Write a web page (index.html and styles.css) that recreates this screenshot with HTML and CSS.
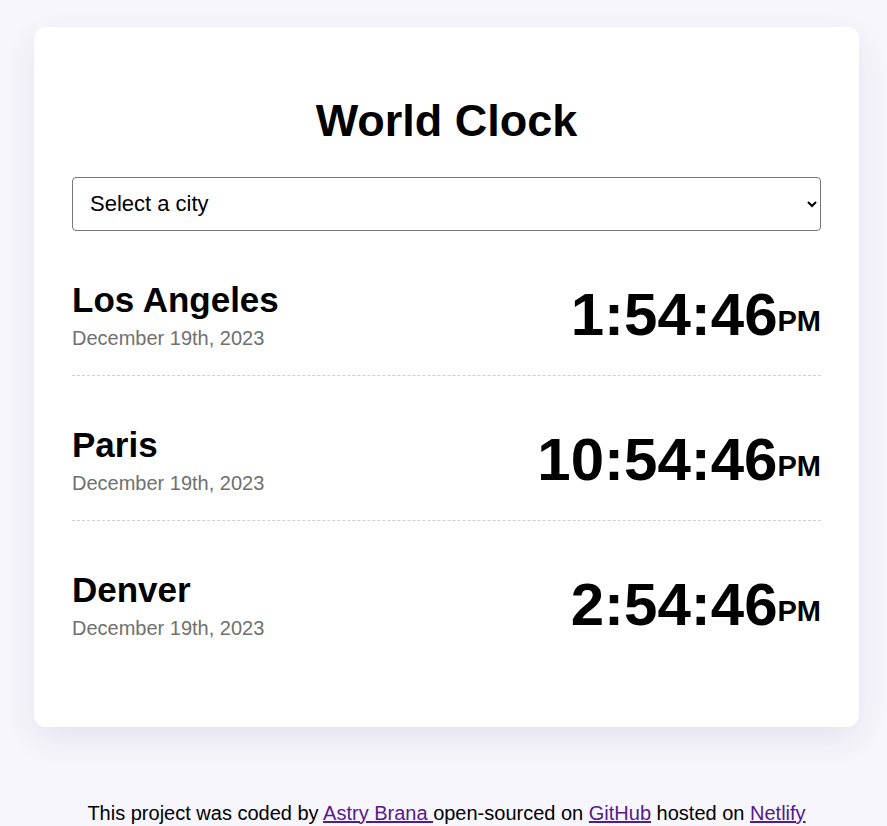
FILE: index.html
```html
<!DOCTYPE html>
<html lang="en">
<head>
<meta charset="utf-8">
<title>World Clock</title>
<link rel="stylesheet" href="styles.css">
</head>
<body>
<div class="page">
  <div class="card">
    <h1 class="title">World Clock</h1>
    <select class="city-select">
      <option>Select a city</option>
      <option>Los Angeles</option>
      <option>Paris</option>
      <option>Denver</option>
    </select>
    <div class="cities">
      <div class="city">
        <div class="city-info">
          <h2 class="city-name">Los Angeles</h2>
          <div class="date">December 19th, 2023</div>
        </div>
        <div class="time">1:54:46<small class="ampm">PM</small></div>
      </div>
      <div class="city">
        <div class="city-info">
          <h2 class="city-name">Paris</h2>
          <div class="date">December 19th, 2023</div>
        </div>
        <div class="time">10:54:46<small class="ampm">PM</small></div>
      </div>
      <div class="city">
        <div class="city-info">
          <h2 class="city-name">Denver</h2>
          <div class="date">December 19th, 2023</div>
        </div>
        <div class="time">2:54:46<small class="ampm">PM</small></div>
      </div>
    </div>
  </div>
  <footer class="footer">This project was coded by <a href="#">Astry Brana </a>open-sourced on <a href="#">GitHub</a> hosted on <a href="#">Netlify</a></footer>
</div>
</body>
</html>
```
FILE: styles.css
```css
html, body {
  margin: 0;
  padding: 0;
}
body {
  background: #f7f6fc;
  font-family: "Liberation Sans", Arial, sans-serif;
  color: #000;
}
.page {
  padding: 27px 28px 0 34px;
}
.card {
  background: #fff;
  border-radius: 12px;
  padding: 38px 38px 38px;
  box-shadow: 0 12px 34px rgba(40, 30, 90, 0.09);
}
.title {
  font-size: 45px;
  font-weight: bold;
  text-align: center;
  margin: 30px 0 30px;
  line-height: 1.15;
}
.city-select {
  display: block;
  width: 100%;
  height: 54px;
  font-family: "Liberation Sans", Arial, sans-serif;
  font-size: 22px;
  padding: 0 13px;
  border: 1px solid #767676;
  border-radius: 4px;
  background: #fff;
  color: #000;
}
.city {
  display: flex;
  justify-content: space-between;
  align-items: center;
  padding: 49px 0 25px;
  border-bottom: 1px dashed #cfcfcf;
}
.city:last-child {
  border-bottom: none;
  padding-bottom: 49px;
}
.city-name {
  margin: 0;
  font-size: 35px;
  line-height: 40px;
  font-weight: bold;
}
.date {
  margin-top: 7px;
  font-size: 20px;
  line-height: 23px;
  color: #707070;
}
.time {
  font-size: 60px;
  font-weight: bold;
  line-height: 69px;
}
.ampm {
  font-size: 29px;
  line-height: 1;
  vertical-align: 4px;
}
.footer {
  text-align: center;
  font-size: 20px;
  line-height: 23px;
  margin-top: 75px;
}
.footer a {
  color: #551a8b;
}
```
